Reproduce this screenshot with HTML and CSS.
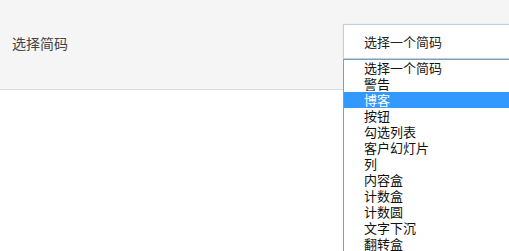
FILE: index.html
```html
<!DOCTYPE html>
<html>
<head>
  <title>Shortcode Picker</title>
  <meta http-equiv="Content-Type" content="text/html; charset=UTF-8">
  <link rel="stylesheet" href="styles.css">
</head>
<body>
  <div class="panel">
    <label class="panel-label">选择简码</label>
    <div class="picker">
      <div class="picker-box">选择一个简码</div>
      <ul class="picker-list">
        <li>选择一个简码</li>
        <li>警告</li>
        <li class="active">博客</li>
        <li>按钮</li>
        <li>勾选列表</li>
        <li>客户幻灯片</li>
        <li>列</li>
        <li>内容盒</li>
        <li>计数盒</li>
        <li>计数圆</li>
        <li>文字下沉</li>
        <li>翻转盒</li>
      </ul>
    </div>
  </div>
</body>
</html>
```

FILE: styles.css
```css
html {
  overflow: hidden;
}

body {
  margin: 0;
  padding: 0;
  height: 100vh;
  overflow: hidden;
  background-color: #FFFFFF;
  font-family: "Noto Sans CJK SC", "Noto Sans", sans-serif;
}

.panel {
  display: flex;
  align-items: center;
  height: 89px;
  padding-left: 12px;
  background-color: #F6F5F6;
  border-bottom: 1px solid #DDDCDD;
}

.panel-label {
  width: 331px;
  flex-shrink: 0;
  font-size: 14px;
  color: #444444;
  padding-bottom: 3px;
}

.picker {
  position: relative;
  flex: 1;
  margin-right: -3px;
  margin-bottom: 6px;
}

.picker-box {
  height: 33px;
  line-height: 33px;
  padding-left: 20px;
  background-color: #FFFFFF;
  border: 1px solid #BDD0DE;
  box-shadow: 0 0 1px #C8D8E6;
  font-size: 13px;
  color: #222222;
}

.picker-list {
  position: absolute;
  top: 35px;
  left: 0;
  right: 0;
  margin: 0;
  padding: 0;
  list-style-type: none;
  background-color: #FFFFFF;
  border: 1px solid #7F9DB9;
}

.picker-list li {
  height: 16px;
  line-height: 16px;
  padding-left: 20px;
  font-size: 13px;
  color: #111111;
}

.picker-list li.active {
  background-color: #3399FF;
  color: #FFFFFF;
}
```
